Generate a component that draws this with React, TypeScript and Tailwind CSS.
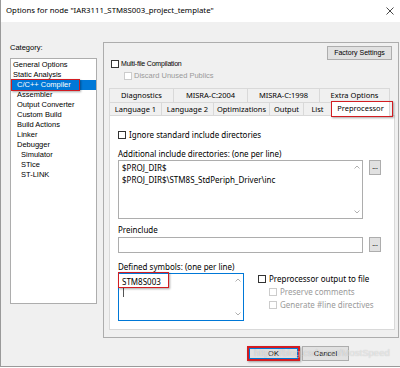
import React from 'react';

const ui = "font-['Noto_Sans',sans-serif]";
const tah = "font-['Liberation_Sans',Arial,sans-serif]";

function Box({ disabled }: { disabled?: boolean }) {
  return (
    <span
      className={`block w-[8px] h-[8px] shrink-0 bg-white border ${disabled ? 'border-[#cccccc]' : 'border-[#333333]'}`}
    />
  );
}

function Check({
  label,
  disabled,
  className = '',
}: {
  label: string;
  disabled?: boolean;
  className?: string;
}) {
  return (
    <div className={`flex items-center gap-[2px] h-[10px] ${className}`}>
      <Box disabled={disabled} />
      <span className={disabled ? 'text-[#9a9a9a]' : 'text-black'}>{label}</span>
    </div>
  );
}

function Chevrons() {
  return (
    <div className="flex flex-col justify-between items-center w-[10px] py-[4px]">
      <svg width="6" height="4" viewBox="0 0 6 4">
        <path d="M0.5 3.5 L3 1 L5.5 3.5" fill="none" stroke="#b0b0b0" strokeWidth="1" />
      </svg>
      <svg width="6" height="4" viewBox="0 0 6 4">
        <path d="M0.5 0.5 L3 3 L5.5 0.5" fill="none" stroke="#b0b0b0" strokeWidth="1" />
      </svg>
    </div>
  );
}

function Dots() {
  return (
    <div className="w-[12px] h-[15px] bg-[#e1e1e1] border border-[#adadad] flex items-center justify-center text-[7px] leading-none text-black pb-[2px]">
      ...
    </div>
  );
}

const categories: { name: string; indent: number }[] = [
  { name: 'General Options', indent: 2 },
  { name: 'Static Analysis', indent: 2 },
  { name: 'C/C++ Compiler', indent: 6 },
  { name: 'Assembler', indent: 6 },
  { name: 'Output Converter', indent: 6 },
  { name: 'Custom Build', indent: 6 },
  { name: 'Build Actions', indent: 6 },
  { name: 'Linker', indent: 6 },
  { name: 'Debugger', indent: 6 },
  { name: 'Simulator', indent: 10 },
  { name: 'STice', indent: 10 },
  { name: 'ST-LINK', indent: 10 },
];

const backTabs = [
  { name: 'Diagnostics', w: 'w-[64px]' },
  { name: 'MISRA-C:2004', w: 'w-[74px]' },
  { name: 'MISRA-C:1998', w: 'w-[72px]' },
  { name: 'Extra Options', w: 'w-[71px]' },
];

const frontTabs = [
  { name: 'Language 1', w: 'w-[52px]' },
  { name: 'Language 2', w: 'w-[52px]' },
  { name: 'Optimizations', w: 'w-[56px]' },
  { name: 'Output', w: 'w-[34px]' },
  { name: 'List', w: 'w-[28px]' },
];

export default function App() {
  return (
    <div className={`relative w-[400px] h-[368px] overflow-hidden bg-white ${ui}`}>
      <div className="w-[400px] h-[367px] bg-[#f0f0f0] border-l border-b border-[#9a9a9a] flex flex-col">
        {/* title bar */}
        <div className="h-[22px] bg-white flex items-center justify-between pl-[5px] pr-[6px] shrink-0">
          <span className="text-[7.8px] text-black">Options for node "IAR3111_STM8S003_project_template"</span>
          <svg width="8" height="8" viewBox="0 0 8 8">
            <path d="M0.5 0.5 L7.5 7.5 M7.5 0.5 L0.5 7.5" stroke="#333" strokeWidth="0.9" />
          </svg>
        </div>

        <div className="flex">
          {/* category column */}
          <div className="ml-[9px] w-[87px] flex flex-col">
            <div className={`mt-[21px] h-[10px] leading-[10px] text-[7.5px] text-black ${tah}`}>Category:</div>
            <div className={`mt-[5px] h-[246px] bg-white border border-[#adadad] pt-px ${tah}`}>
              {categories.map((c) =>
                c.name === 'C/C++ Compiler' ? (
                  <div key={c.name} className="relative h-[10px] bg-[#0078d7] text-white text-[7.5px] leading-[10px]" style={{ paddingLeft: c.indent }}>
                    {c.name}
                    <div className="absolute left-0 top-[-1px] w-[69px] h-[12px] border-[1.5px] border-[#d21d22] shadow-[1px_1px_2px_rgba(0,0,0,0.35)]" />
                  </div>
                ) : (
                  <div key={c.name} className="h-[10px] text-black text-[7.5px] leading-[10px]" style={{ paddingLeft: c.indent }}>
                    {c.name}
                  </div>
                ),
              )}
            </div>
          </div>

          {/* options panel */}
          <div className="ml-[6px] mt-[20px] w-[296px] h-[296px] border border-[#adadad] flex flex-col shrink-0">
            <div className="flex justify-between">
              <div className={`pl-[7px] pt-[16px] flex flex-col gap-[2px] text-[7px] ${tah}`}>
                <Check label="Multi-file Compilation" className="tracking-[-0.2px]" />
                <Check label="Discard Unused Publics" disabled className="ml-[13px] text-[7.5px]" />
              </div>
              <div className={`mt-[3px] mr-[6px] w-[65px] h-[14px] bg-[#e1e1e1] border border-[#adadad] flex items-center justify-center text-[7px] text-black ${tah}`}>
                Factory Settings
              </div>
            </div>

            {/* tabs */}
            <div className="ml-[5px] mt-[7px] flex flex-col text-[7.5px] text-black">
              <div className="flex h-[14px]">
                {backTabs.map((t) => (
                  <div key={t.name} className={`${t.w} h-[14px] border border-b-0 border-r-0 last:border-r border-[#d9d9d9] flex items-center justify-center`}>
                    {t.name}
                  </div>
                ))}
              </div>
              <div className="flex h-[14px]">
                {frontTabs.map((t) => (
                  <div key={t.name} className={`${t.w} h-[14px] border border-r-0 border-b-0 border-[#d9d9d9] flex items-center justify-center`}>
                    {t.name}
                  </div>
                ))}
                <div className="relative w-[59px] h-[15px] -mt-px bg-white border border-b-0 border-[#d9d9d9] flex items-center justify-center z-10">
                  Preprocessor
                  <div className="absolute left-[-1px] top-[-1px] w-[62px] h-[16px] border-[1.5px] border-[#d21d22] shadow-[1px_1px_2px_rgba(0,0,0,0.35)]" />
                </div>
              </div>

              {/* tab page */}
              <div className="w-[286px] h-[215px] bg-white border border-[#d9d9d9] -mt-px flex flex-col pl-[8px] text-[8px]">
                <Check label="Ignore standard include directories" className="mt-[14px] gap-[3px]" />
                <div className="mt-[8px] h-[11px] leading-[11px]">Additional include directories: (one per line)</div>
                <div className="mt-px flex items-start gap-[6px]">
                  <div className="w-[245px] h-[59px] border border-[#adadad] flex justify-between">
                    <div className="pl-[3px] pt-[1px] leading-[12px]">
                      <div>$PROJ_DIR$</div>
                      <div>$PROJ_DIR$\STM8S_StdPeriph_Driver\inc</div>
                    </div>
                    <Chevrons />
                  </div>
                  <Dots />
                </div>
                <div className="mt-[5px] h-[11px] leading-[11px]">Preinclude</div>
                <div className="mt-[2px] flex items-start gap-[6px]">
                  <div className="w-[245px] h-[16px] border border-[#adadad]" />
                  <Dots />
                </div>
                <div className="mt-[8px] h-[11px] leading-[11px]">Defined symbols: (one per line)</div>
                <div className="mt-px flex items-start">
                  <div className="relative w-[126px] h-[48px] border border-[#0078d7] flex justify-between">
                    <div className="pl-[3px] pt-[2px] leading-[12px]">
                      <div>STM8S003</div>
                      <div className="ml-px w-px h-[9px] bg-[#555]" />
                    </div>
                    <Chevrons />
                    <div className="absolute left-[-1px] top-[-2px] w-[51px] h-[16px] border-[1.5px] border-[#d21d22] shadow-[1px_1px_2px_rgba(0,0,0,0.35)]" />
                  </div>
                  <div className="ml-[14px] mt-[1px] flex flex-col gap-[3px]">
                    <Check label="Preprocessor output to file" className="gap-[3px]" />
                    <Check label="Preserve comments" disabled className="ml-[11px] gap-[3px]" />
                    <Check label="Generate #line directives" disabled className="ml-[11px] gap-[3px]" />
                  </div>
                </div>
              </div>
            </div>
          </div>
        </div>

        {/* dialog buttons */}
        <div className={`mt-[8px] flex justify-end gap-[2px] pr-[51px] text-[7.5px] text-black ${tah}`}>
          <div className="w-[53px] h-[15px] border-2 border-[#d21d22] shadow-[1px_1px_2px_rgba(0,0,0,0.35)]">
            <div className="w-full h-full border border-[#0078d7] bg-[#e1e1e1] flex items-center justify-center">OK</div>
          </div>
          <div className="w-[47px] h-[15px] bg-[#e1e1e1] border border-[#adadad] flex items-center justify-center">Cancel</div>
        </div>
      </div>

      {/* watermark */}
      <div className={`absolute left-[254px] top-[346px] text-[9.5px] text-[rgba(255,255,255,0.55)] [text-shadow:0_0_1px_rgba(0,0,0,0.25)] ${tah}`}>
        https://blog.csdn.net/MostSpeed
      </div>
    </div>
  );
}
